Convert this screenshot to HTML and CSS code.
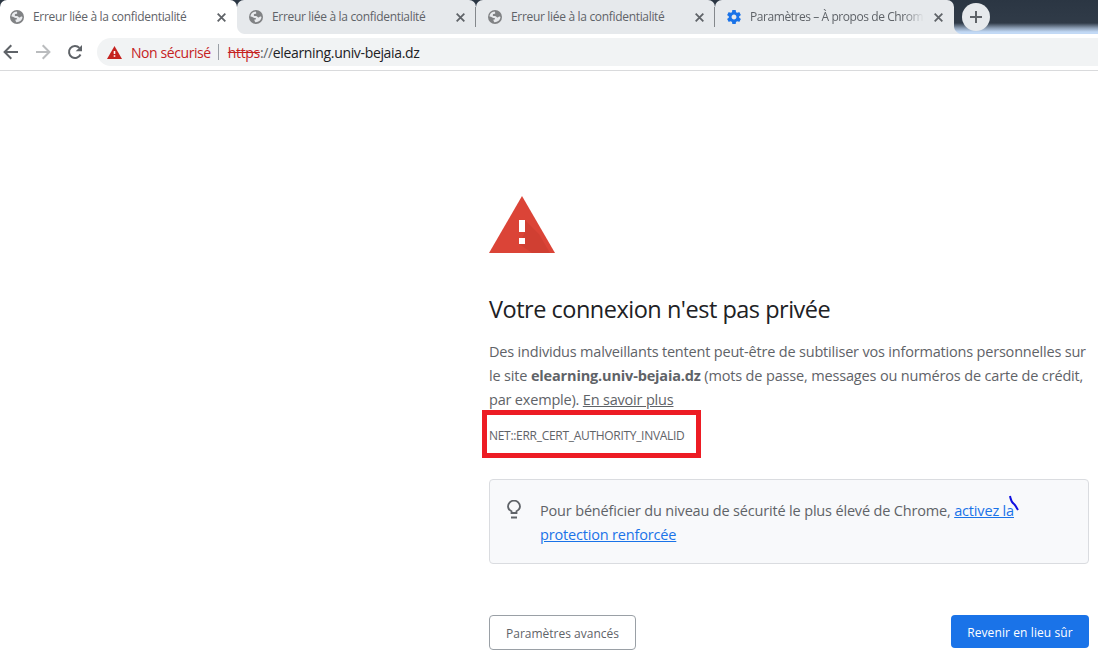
FILE: index.html
```
<!DOCTYPE html>
<html lang="fr">
<head>
  <meta charset="UTF-8">
  <title>Erreur liée à la confidentialité</title>
  <link rel="stylesheet" href="styles.css">
</head>
<body>
  <svg width="0" height="0" class="defs">
    <symbol id="globe" viewBox="0 0 14 14">
      <circle cx="7" cy="7" r="7" fill="#808284"/>
      <path d="M6.600 1.500C3.800 1.700 1.600 3.900 1.500 6.600c1.100.1 2 .2 2.700.8.8.5 1.500.6 2.600.7v1.400H5.500v1.200l.8 1.500c3 .3 6-2 6.200-5.200-.8-.6-1.800-.5-2.400.2-.7.5-1.400.2-1.700-.5L7.200 6H5.300c-.8-.5-.6-1.400 0-2l1.500-.2c.7-.4.6-1.200-.2-2.300z" fill="#e8eaed"/>
    </symbol>
    <symbol id="close" viewBox="0 0 8 8">
      <path d="M.6.6l6.800 6.800M7.400.6L.6 7.400" stroke="#5f6368" stroke-width="1.600"/>
    </symbol>
    <symbol id="gear" viewBox="2 2 20 20">
      <path fill="#1a73e8" d="M19.430 12.980c.04-.32.07-.64.07-.98s-.03-.66-.07-.98l2.110-1.650c.19-.15.24-.42.12-.64l-2-3.460c-.12-.22-.39-.3-.61-.22l-2.490 1c-.52-.4-1.080-.73-1.690-.98l-.38-2.650C14.460 2.180 14.250 2 14 2h-4c-.25 0-.46.18-.49.42l-.38 2.650c-.61.25-1.170.59-1.690.98l-2.490-1c-.23-.09-.49 0-.61.22l-2 3.460c-.13.22-.07.49.12.64l2.110 1.650c-.04.32-.07.65-.07.98s.03.66.07.98l-2.110 1.650c-.19.15-.24.42-.12.64l2 3.460c.12.22.39.3.61.22l2.490-1c.52.4 1.080.73 1.690.98l.38 2.650c.03.24.24.42.49.42h4c.25 0 .46-.18.49-.42l.38-2.650c.61-.25 1.170-.59 1.690-.98l2.490 1c.23.09.49 0 .61-.22l2-3.460c.12-.22.07-.49-.12-.64l-2.110-1.650zM12 15.500c-1.930 0-3.500-1.570-3.500-3.500s1.570-3.500 3.500-3.500 3.500 1.570 3.500 3.500-1.570 3.500-3.500 3.500z"/>
    </symbol>
  </svg>

  <div class="tabs">
    <div class="tab active">
      <svg class="favicon"><use href="#globe"/></svg>
      <span class="title">Erreur liée à la confidentialité</span>
      <svg class="close"><use href="#close"/></svg>
    </div>
    <div class="tab first">
      <svg class="favicon"><use href="#globe"/></svg>
      <span class="title">Erreur liée à la confidentialité</span>
      <svg class="close"><use href="#close"/></svg>
    </div>
    <div class="tab">
      <svg class="favicon"><use href="#globe"/></svg>
      <span class="title">Erreur liée à la confidentialité</span>
      <svg class="close"><use href="#close"/></svg>
    </div>
    <div class="tab last">
      <svg class="favicon"><use href="#gear"/></svg>
      <span class="title long">Paramètres – À propos de Chrom</span>
      <svg class="close"><use href="#close"/></svg>
    </div>
    <div class="newtab">
      <svg width="12" height="12" viewBox="0 0 12 12"><path d="M6 0v12M0 6h12" stroke="#5f6368" stroke-width="2"/></svg>
    </div>
  </div>

  <div class="toolbar">
    <svg class="nav" width="16" height="16" viewBox="0 0 16 16"><path d="M15 8H2M8.300 1.300L1.600 8l6.700 6.700" fill="none" stroke="#5f6368" stroke-width="2"/></svg>
    <svg class="nav" width="16" height="16" viewBox="0 0 16 16"><path d="M1 8h13M7.700 1.300L14.400 8l-6.700 6.700" fill="none" stroke="#babcbe" stroke-width="2"/></svg>
    <svg class="nav" width="16" height="16" viewBox="0 0 16 16"><path d="M13.500 10.500A6 6 0 1 1 12.400 3.900" fill="none" stroke="#5f6368" stroke-width="2"/><path d="M15 1v6.300H8.700z" fill="#5f6368"/></svg>
    <div class="omnibox">
      <svg width="15" height="13" viewBox="0 0 15 13"><path d="M7.500 0L15 13H0z" fill="#c5221f"/><path d="M6.700 5h1.600v3H6.700zM6.700 9.300h1.600v1.500H6.700z" fill="#fff"/></svg>
      <span class="unsafe">Non sécurisé</span>
      <span class="divider"></span>
      <span class="url"><s>https</s><span class="slashes">://</span>elearning.univ-bejaia.dz</span>
    </div>
  </div>

  <main class="page">
    <svg class="warning" width="66" height="57" viewBox="0 0 66 57">
      <path d="M33 0l33 57H0z" fill="#db4437"/>
      <path d="M36 24l14 14 11 19H43l-13-9 6-12z" fill="#bd362c" opacity=".35"/>
      <path d="M30 24h6v12h-6zM30 42h6v6h-6z" fill="#fff"/>
    </svg>
    <h1>Votre connexion n'est pas privée</h1>
    <p class="message">
      Des individus malveillants tentent peut-être de subtiliser vos informations personnelles sur<br>
      <span class="site">le site <strong>elearning.univ-bejaia.dz</strong> (mots de passe, messages ou numéros de carte de crédit,</span><br>
      par exemple). <a class="more">En savoir plus</a>
    </p>
    <div class="code">NET::ERR_CERT_AUTHORITY_INVALID</div>
    <div class="tip">
      <svg class="bulb" width="14" height="19" viewBox="0 0 14 19"><path d="M4.500 13v-1.700C2.500 10.300 1 8.800 1 6.600a6 6 0 0 1 12 0c0 2.200-1.500 3.700-3.500 4.700V13z" fill="none" stroke="#5f6368" stroke-width="1.800"/><path d="M4 16.500h6v2H4z" fill="#5f6368"/></svg>
      <p>Pour bénéficier du niveau de sécurité le plus élevé de Chrome, <a>activez la</a><br><a>protection renforcée</a></p>
      <svg class="scribble" width="12" height="17" viewBox="0 0 12 17"><path d="M2 1c1 4 1 6 4 8 2 2 2 3 4 6" fill="none" stroke="#1010e0" stroke-width="2"/></svg>
    </div>
    <div class="buttons">
      <button class="details">Paramètres avancés</button>
      <button class="primary">Revenir en lieu sûr</button>
    </div>
  </main>
</body>
</html>
```
FILE: styles.css
```
body {
  margin: 0;
  background: #fff;
  color: #5f6368;
  font-family: "Open Sans", "Noto Sans", sans-serif;
  overflow: hidden;
}
.defs {
  display: block;
}
.tabs {
  display: flex;
  height: 34px;
  background: linear-gradient(#2b3643 0, #303b48 23px, #8b9db3 28px, #c2d9f5 32px);
}
.tab {
  box-sizing: border-box;
  position: relative;
  display: flex;
  align-items: center;
  width: 239px;
  height: 34px;
  padding: 0 11px 0 12px;
  background: #e6e9ec;
  border-radius: 7px 7px 0 0;
}
.tab.active {
  width: 237px;
  padding-left: 10px;
  background: #fff;
}
/* curved feet of the tabs */
.tab.active::after,
.tab.last::after {
  content: "";
  position: absolute;
  z-index: 1;
  left: 100%;
  bottom: 0;
  width: 8px;
  height: 8px;
  background: radial-gradient(circle at 100% 0, transparent 7.5px, #fff 8.5px);
}
.tab.last::after {
  background: radial-gradient(circle at 100% 0, transparent 7.5px, #e6e9ec 8.5px);
}
/* separator between inactive tabs */
.tab + .tab:not(.first)::before {
  content: "";
  position: absolute;
  left: -1px;
  top: 7px;
  width: 1px;
  height: 20px;
  background: #84888c;
}
.favicon {
  width: 14px;
  height: 14px;
  margin-right: 9px;
}
.title {
  padding-bottom: 1px;
  font-size: 12px;
  letter-spacing: -0.32px;
  white-space: nowrap;
}
.title.long {
  width: 174px;
  letter-spacing: -0.43px;
  -webkit-mask-image: linear-gradient(to right, #000 88%, transparent);
  mask-image: linear-gradient(to right, #000 88%, transparent);
}
.close {
  width: 9px;
  height: 9px;
  margin-left: auto;
}
.newtab {
  display: flex;
  align-items: center;
  justify-content: center;
  width: 28px;
  height: 28px;
  margin: 3px 0 0 8px;
  border-radius: 50%;
  background: #e6e9ec;
}
.toolbar {
  display: flex;
  align-items: center;
  height: 36px;
  padding-left: 3px;
  background: #fff;
  border-bottom: 1px solid #d9dadc;
}
.nav {
  margin-right: 16px;
}
.omnibox {
  display: flex;
  flex: 1;
  align-items: center;
  height: 28px;
  margin-left: -2px;
  padding-left: 10px;
  background: #f1f3f4;
  border-radius: 14px 0 0 14px;
  font-size: 14px;
  letter-spacing: -0.34px;
  white-space: nowrap;
}
.unsafe {
  margin-left: 9px;
  color: #c5221f;
  letter-spacing: -0.42px;
}
.divider {
  width: 1px;
  height: 16px;
  margin: 0 9px 0 7px;
  background: #9aa0a6;
}
.url {
  color: #202124;
}
.url s {
  color: #c5221f;
}
.slashes {
  color: #5f6368;
}
.page {
  width: 600px;
  margin-left: 489px;
  padding-top: 125px;
}
.warning {
  display: block;
}
h1 {
  margin: 40px 0 0;
  color: #202124;
  font-size: 23.5px;
  font-weight: normal;
  letter-spacing: -0.49px;
  line-height: 32px;
  white-space: nowrap;
}
p {
  margin: 0;
  font-size: 14.5px;
  letter-spacing: -0.17px;
  line-height: 24px;
  white-space: nowrap;
}
.message {
  margin-top: 15px;
  letter-spacing: -0.19px;
}
.site {
  letter-spacing: -0.16px;
}
a {
  color: #1a73e8;
  text-decoration: underline;
}
.more {
  color: #5f6368;
}
.code {
  box-sizing: border-box;
  width: 219px;
  height: 48px;
  margin: -2px 0 0 -7px;
  padding-left: 2px;
  border: 5px solid #ed1c24;
  font-size: 12px;
  letter-spacing: -0.3px;
  line-height: 41px;
  white-space: nowrap;
}
.tip {
  box-sizing: border-box;
  position: relative;
  display: flex;
  height: 85px;
  margin-top: 21px;
  padding: 19px 0 0 17px;
  background: #f8f9fb;
  border: 1px solid #dadce0;
  border-radius: 4px;
}
.bulb {
  margin: 1px 19px 0 0;
}
.scribble {
  position: absolute;
  left: 518px;
  top: 15px;
}
.buttons {
  display: flex;
  justify-content: space-between;
  margin-top: 51px;
}
button {
  box-sizing: border-box;
  padding: 2px 0 0;
  border-radius: 4px;
  font: 12px "Open Sans", "Noto Sans", sans-serif;
  white-space: nowrap;
}
.details {
  width: 147px;
  height: 35px;
  background: #fff;
  border: 1px solid #9aa0a6;
  color: #5f6368;
}
.primary {
  width: 138px;
  height: 33px;
  background: #1a73e8;
  border: none;
  color: #fff;
  letter-spacing: 0.1px;
}
```
